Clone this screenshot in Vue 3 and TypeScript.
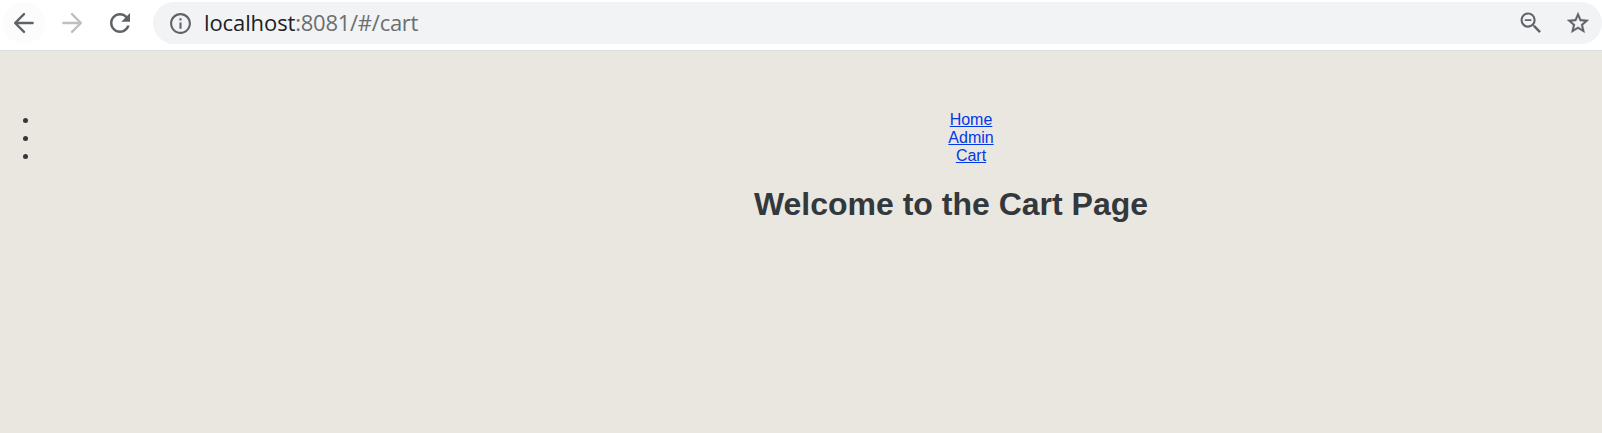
<script setup lang="ts">
interface NavLink {
  label: string
  href: string
}

const links: NavLink[] = [
  { label: 'Home', href: '#/' },
  { label: 'Admin', href: '#/admin' },
  { label: 'Cart', href: '#/cart' },
]
</script>

<template>
  <div class="window">
    <header class="toolbar">
      <button class="nav-button back" aria-label="Back">
        <svg class="arrow" width="30" height="30" viewBox="0 0 24 24"><path d="M18.900 12H5.300M12 4.900L4.900 12l7.100 7.100" /></svg>
      </button>
      <button class="nav-button forward" aria-label="Forward">
        <svg class="arrow" width="30" height="30" viewBox="0 0 24 24"><path d="M5.100 12h13.600M12 4.900l7.100 7.100-7.100 7.100" /></svg>
      </button>
      <button class="nav-button reload" aria-label="Reload">
        <svg width="30" height="30" viewBox="0 0 24 24"><path d="M17.650 6.350C16.200 4.900 14.210 4 12 4c-4.420 0-7.990 3.580-7.990 8s3.570 8 7.990 8c3.730 0 6.840-2.550 7.730-6h-2.080c-.82 2.330-3.040 4-5.650 4-3.310 0-6-2.690-6-6s2.690-6 6-6c1.660 0 3.140.69 4.220 1.780L13 11h7V4l-2.350 2.350z" /></svg>
      </button>
      <div class="address">
        <svg class="info" width="25" height="25" viewBox="0 0 24 24"><path d="M11 17h2v-6h-2v6zm1-15C6.480 2 2 6.480 2 12s4.480 10 10 10 10-4.480 10-10S17.520 2 12 2zm0 18c-4.410 0-8-3.590-8-8s3.590-8 8-8 8 3.590 8 8-3.590 8-8 8zM11 9h2V7h-2v2z" /></svg>
        <div class="url"><span class="host">localhost</span><span class="path">:8081/#/cart</span></div>
        <svg class="zoom" width="28" height="28" viewBox="0 0 24 24"><path d="M15.500 14h-.79l-.28-.27A6.471 6.471 0 0 0 16 9.500 6.500 6.500 0 1 0 9.500 16c1.610 0 3.090-.59 4.230-1.570l.27.28v.79l5 4.990L20.490 19l-4.990-5zm-6 0.200C6.900 14.200 4.800 12.100 4.800 9.500S6.900 4.800 9.500 4.800 14.200 6.900 14.200 9.500 12.100 14.200 9.500 14.200zM6.700 8.800h5.600v1.400H6.700z" /></svg>
        <svg class="star" width="26" height="26" viewBox="0 0 24 24"><path d="M22 9.240l-7.190-.62L12 2 9.190 8.630 2 9.240l5.460 4.730L5.820 21 12 17.270 18.180 21l-1.630-7.030L22 9.240zM12 15.400l-3.760 2.270 1-4.280-3.320-2.880 4.380-.38L12 6.100l1.710 4.040 4.380.38-3.320 2.880 1 4.280L12 15.400z" /></svg>
      </div>
    </header>
    <main class="page">
      <div class="content">
        <ul class="links">
          <li v-for="link in links" :key="link.label"><a :href="link.href">{{ link.label }}</a></li>
        </ul>
        <h1>Welcome to the Cart Page</h1>
      </div>
    </main>
  </div>
</template>

<style>
body {
  margin: 0;
  background: #eae7e0;
}
</style>

<style scoped>
.window {
  height: 433px;
  overflow: hidden;
  display: flex;
  flex-direction: column;
  background: #eae7e0;
}
.toolbar {
  box-sizing: border-box;
  flex: none;
  height: 51px;
  display: flex;
  align-items: flex-start;
  padding: 2px 0 0 3px;
  background: #fff;
  border-bottom: 1px solid #dadce0;
}
.nav-button {
  flex: none;
  width: 42px;
  height: 42px;
  margin-right: 6px;
  padding: 0;
  border: 0;
  border-radius: 50%;
  background: transparent;
  display: flex;
  align-items: center;
  justify-content: center;
}
.nav-button svg {
  fill: #5f6368;
}
.nav-button .arrow {
  fill: none;
  stroke: #5f6368;
  stroke-width: 1.9;
  stroke-linecap: round;
  stroke-linejoin: round;
}
.back {
  background: #fcfcfc;
}
.forward .arrow {
  stroke: #bdbfc1;
}
.reload {
  margin-right: 12px;
}
.address {
  box-sizing: border-box;
  flex: 1;
  height: 42px;
  display: flex;
  align-items: center;
  padding: 0 11px 0 15px;
  border-radius: 21px;
  background: #f1f3f4;
}
.address svg {
  flex: none;
  fill: #5f6368;
}
.address .star {
  margin-left: 20px;
  stroke: #5f6368;
  stroke-width: 0.3;
}
.url {
  flex: 1;
  margin-left: 11px;
  padding-bottom: 2px;
  font: 22px/30px "Open Sans", "Noto Sans", sans-serif;
  white-space: nowrap;
}
.host {
  color: #202124;
  letter-spacing: -0.1px;
}
.path {
  color: #6b6e72;
  letter-spacing: -0.26px;
}
.page {
  flex: 1;
  overflow: hidden;
}
.content {
  width: 1902px;
  padding-top: 60px;
  font-family: "Liberation Sans", Arial, sans-serif;
  font-size: 16px;
  line-height: 18px;
  text-align: center;
  color: #33383c;
}
.links {
  margin: 0;
  padding-left: 39px;
}
.links a {
  margin-left: 1px;
  color: #0338e8;
}
h1 {
  margin: 21.44px 0;
  font-size: 32px;
  line-height: 37px;
}
</style>
